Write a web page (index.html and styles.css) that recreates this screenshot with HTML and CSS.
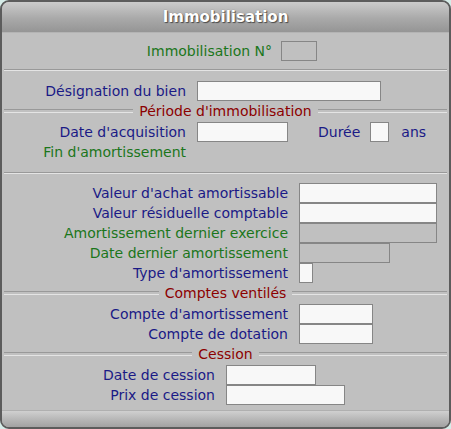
FILE: index.html
```html
<!DOCTYPE html>
<html lang="fr">
<head>
<meta charset="utf-8">
<title>Immobilisation</title>
<link rel="stylesheet" href="styles.css">
</head>
<body>
<div class="window">
  <div class="titlebar">Immobilisation</div>
  <div class="content">
    <div class="row row-num">
      <span class="lbl green w-num">Immobilisation N°</span>
      <span class="field disabled w36"></span>
    </div>
    <div class="sep"></div>
    <div class="row">
      <span class="lbl navy w-a">Désignation du bien</span>
      <span class="field w184"></span>
    </div>
    <div class="legend"><span>Période d'immobilisation</span></div>
    <div class="row row-tight">
      <span class="lbl navy w-a">Date d'acquisition</span>
      <span class="field w91"></span>
      <span class="lbl navy duree">Durée</span>
      <span class="field w19"></span>
      <span class="lbl navy ans">ans</span>
    </div>
    <div class="row">
      <span class="lbl green w-a">Fin d'amortissement</span>
    </div>
    <div class="sep sep2"></div>
    <div class="row">
      <span class="lbl navy w-b">Valeur d'achat amortissable</span>
      <span class="field w138"></span>
    </div>
    <div class="row">
      <span class="lbl navy w-b">Valeur résiduelle comptable</span>
      <span class="field w138"></span>
    </div>
    <div class="row">
      <span class="lbl green w-b">Amortissement dernier exercice</span>
      <span class="field disabled w138"></span>
    </div>
    <div class="row">
      <span class="lbl green w-b">Date dernier amortissement</span>
      <span class="field disabled w91"></span>
    </div>
    <div class="row">
      <span class="lbl navy w-b">Type d'amortissement</span>
      <span class="field w14"></span>
    </div>
    <div class="legend"><span>Comptes ventilés</span></div>
    <div class="row row-tight">
      <span class="lbl navy w-b">Compte d'amortissement</span>
      <span class="field w74"></span>
    </div>
    <div class="row">
      <span class="lbl navy w-b">Compte de dotation</span>
      <span class="field w74"></span>
    </div>
    <div class="legend"><span>Cession</span></div>
    <div class="row row-tight">
      <span class="lbl navy w-c">Date de cession</span>
      <span class="field w90"></span>
    </div>
    <div class="row">
      <span class="lbl navy w-c">Prix de cession</span>
      <span class="field w119"></span>
    </div>
  </div>
  <div class="footer"></div>
</div>
</body>
</html>
```

FILE: styles.css
```css
* { box-sizing: border-box; }
html, body { margin: 0; padding: 0; }
body {
  background: #d6ece8;
  width: 451px;
  height: 429px;
  font-family: "DejaVu Sans", Verdana, sans-serif;
  font-size: 14px;
}
.window {
  width: 451px;
  height: 429px;
  border: 2px solid #5c5c5c;
  border-radius: 9px;
  background: #c0c0c0;
  display: flex;
  flex-direction: column;
  overflow: hidden;
}
.titlebar {
  height: 31px;
  flex: none;
  background: linear-gradient(#cbcbcb, #a9a9a9 55%, #959595);
  border-bottom: 1px solid #b4b4b4;
  color: #ffffff;
  font-weight: bold;
  font-size: 15px;
  text-align: center;
  line-height: 30px;
  text-shadow: 1px 1px 1px #4a4a4a, 0 0 1px #6a6a6a;
}
.content {
  flex: 1;
  padding: 8px 2px 0;
  display: flex;
  flex-direction: column;
}
.row {
  height: 20px;
  display: flex;
  align-items: center;
}
.row-tight { margin-top: 1px; }
.lbl {
  white-space: nowrap;
  text-align: right;
  flex: none;
}
.green { color: #1b761b; }
.navy { color: #1a1a86; }
.w-num { width: 268px; margin-right: 9px; }
.w-a { width: 182px; margin-right: 11px; }
.w-b { width: 284px; margin-right: 11px; }
.w-c { width: 211px; margin-right: 11px; }
.duree { margin-left: 30px; margin-right: 10px; }
.ans { margin-left: 12px; }
.field {
  display: block;
  flex: none;
  height: 20px;
  background: #f8f8f8;
  border: 1px solid #868686;
}
.field.disabled { background: #c0c0c0; }
.w14 { width: 14px; }
.w19 { width: 19px; }
.w36 { width: 36px; }
.w74 { width: 74px; }
.w90 { width: 90px; }
.w91 { width: 91px; }
.w119 { width: 119px; }
.w138 { width: 138px; }
.w184 { width: 184px; }
.sep {
  height: 2px;
  margin: 8px 0 10px;
  border-top: 1px solid #999999;
  border-bottom: 1px solid #e4e4e4;
}
.sep2 { margin: 10px 0 9px; }
.legend {
  height: 20px;
  display: flex;
  align-items: center;
  color: #8c0000;
}
.legend::before, .legend::after {
  content: "";
  flex: 1;
  height: 2px;
  border-top: 1px solid #999999;
  border-bottom: 1px solid #e4e4e4;
}
.legend span { padding: 0 6px; }
.footer {
  height: 17px;
  flex: none;
  background: linear-gradient(#d0d0d0, #b8b8b8 50%, #a2a2a2);
  border-top: 1px solid #b0b0b0;
}
```
